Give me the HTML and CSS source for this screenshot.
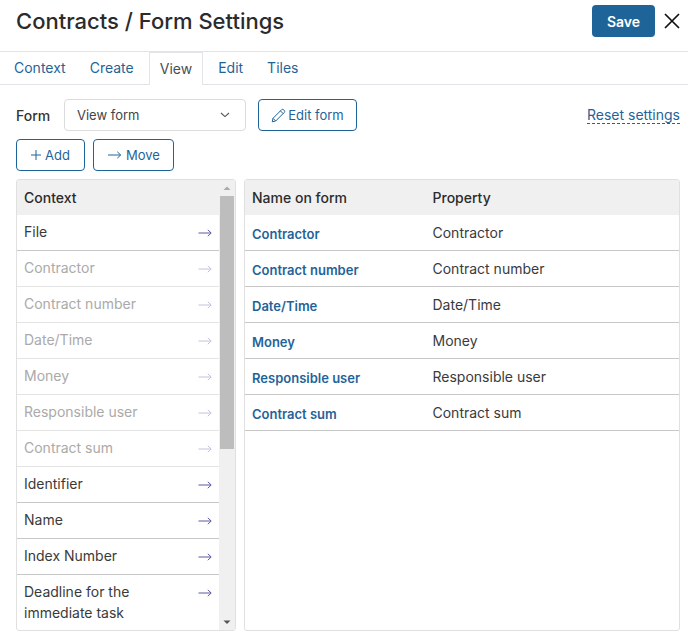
FILE: index.html
```html
<!DOCTYPE html>
<html lang="en">
<head>
<meta charset="utf-8">
<title>Form Settings</title>
<link rel="stylesheet" href="styles.css">
</head>
<body>
<svg class="sprite" width="0" height="0"><defs>
<symbol id="arrow" viewBox="0 0 14 8"><path d="M0.5 4H13M9.8 0.8L13.2 4L9.8 7.2" fill="none" stroke="currentColor" stroke-width="1"/></symbol>
</defs></svg>
<header class="header">
  <h1 class="title">Contracts / Form Settings</h1>
  <div class="header-actions">
    <button class="btn-save">Save</button>
    <svg class="close" width="16" height="16" viewBox="0 0 16 16"><path d="M1 1L15 15M15 1L1 15" stroke="#111" stroke-width="1.7" fill="none"/></svg>
  </div>
</header>
<nav class="tabs">
  <a class="tab">Context</a><a class="tab">Create</a><a class="tab active">View</a><a class="tab">Edit</a><a class="tab">Tiles</a>
</nav>
<div class="form-row">
  <span class="form-label">Form</span>
  <div class="select"><span>View form</span>
    <svg width="10" height="6" viewBox="0 0 10 6"><path d="M1 1L5 4.6L9 1" fill="none" stroke="#555" stroke-width="1.1"/></svg>
  </div>
  <button class="btn btn-edit"><svg width="15" height="15" viewBox="0 0 15 15"><path d="M1.2 13.8L2 10.3L10.6 1.7Q11.6 0.8 12.7 1.8L13.2 2.3Q14.2 3.4 13.3 4.4L4.7 13ZM2 10.3L4.7 13M9.4 2.9L12.1 5.6" fill="none" stroke="#1f6499" stroke-width="1"/></svg>Edit form</button>
  <a class="reset">Reset settings</a>
</div>
<div class="action-row">
  <button class="btn btn-add"><svg width="10" height="10" viewBox="0 0 10 10"><path d="M5 0V10M0 5H10" stroke="#1f6499" stroke-width="1" fill="none"/></svg>Add</button>
  <button class="btn btn-move"><svg class="move-arrow" width="15" height="8" viewBox="0 0 14 8"><use href="#arrow"/></svg>Move</button>
</div>
<main class="panels">
  <section class="panel panel-left">
    <div class="list">
      <div class="list-head">Context</div>
      <div class="item"><span>File</span><svg class="arrow" width="14" height="8"><use href="#arrow"/></svg></div>
      <div class="item off"><span>Contractor</span><svg class="arrow" width="14" height="8"><use href="#arrow"/></svg></div>
      <div class="item off"><span>Contract number</span><svg class="arrow" width="14" height="8"><use href="#arrow"/></svg></div>
      <div class="item off"><span>Date/Time</span><svg class="arrow" width="14" height="8"><use href="#arrow"/></svg></div>
      <div class="item off"><span>Money</span><svg class="arrow" width="14" height="8"><use href="#arrow"/></svg></div>
      <div class="item off"><span>Responsible user</span><svg class="arrow" width="14" height="8"><use href="#arrow"/></svg></div>
      <div class="item off"><span>Contract sum</span><svg class="arrow" width="14" height="8"><use href="#arrow"/></svg></div>
      <div class="item"><span>Identifier</span><svg class="arrow" width="14" height="8"><use href="#arrow"/></svg></div>
      <div class="item"><span>Name</span><svg class="arrow" width="14" height="8"><use href="#arrow"/></svg></div>
      <div class="item"><span>Index Number</span><svg class="arrow" width="14" height="8"><use href="#arrow"/></svg></div>
      <div class="item last"><span>Deadline for the immediate task</span><svg class="arrow" width="14" height="8"><use href="#arrow"/></svg></div>
    </div>
    <div class="scrollbar">
      <svg class="scroll-btn" width="16" height="16" viewBox="0 0 16 16"><path d="M4.5 10H11.5L8 6.5Z" fill="#aaa"/></svg>
      <div class="track"><div class="thumb"></div></div>
      <svg class="scroll-btn" width="16" height="16" viewBox="0 0 16 16"><path d="M4.5 6.5H11.5L8 10Z" fill="#555"/></svg>
    </div>
  </section>
  <section class="panel panel-right">
    <div class="grid-head"><span>Name on form</span><span>Property</span></div>
    <div class="grid-row"><a>Contractor</a><span>Contractor</span></div>
    <div class="grid-row"><a>Contract number</a><span>Contract number</span></div>
    <div class="grid-row"><a>Date/Time</a><span>Date/Time</span></div>
    <div class="grid-row"><a>Money</a><span>Money</span></div>
    <div class="grid-row"><a>Responsible user</a><span>Responsible user</span></div>
    <div class="grid-row"><a>Contract sum</a><span>Contract sum</span></div>
  </section>
</main>
</body>
</html>
```
FILE: styles.css
```css
* { box-sizing: border-box; }
html, body { margin: 0; padding: 0; }
body {
  width: 688px; height: 637px; overflow: hidden; background: #fff;
  font-family: Inter, "Liberation Sans", sans-serif; font-size: 14px; color: #333;
}
.sprite { position: absolute; }
button { font-family: inherit; cursor: pointer; }
.header {
  height: 52px; border-bottom: 1px solid #e2e4e9; padding: 5px 8px 0 16px;
  display: flex; justify-content: space-between; align-items: flex-start;
}
.title { margin: 0; font-size: 22px; line-height: 32px; font-weight: 500; color: #2b2b2b; }
.header-actions { display: flex; align-items: center; gap: 9px; }
.btn-save {
  width: 63px; height: 32px; border: 0; border-radius: 4px; background: #1f6499;
  color: #fff; font-size: 14px; font-weight: 600; padding: 0;
}
.close { display: block; }
.tabs { height: 33px; border-bottom: 1px solid #e2e4e9; display: flex; padding-left: 5px; }
.tab {
  padding: 0 8px; height: 32px; line-height: 32px; color: #1f6499; font-size: 14px;
  border: 1px solid transparent; border-top: 0; border-bottom: 0; margin-right: 6px; white-space: nowrap;
}
.tab.active {
  height: 33px; background: #fff; color: #4a4f55; border-color: #e2e4e9; border-top: 1px solid #e2e4e9;
  line-height: 31px; padding: 0 10px;
}
.form-row { display: flex; align-items: center; height: 32px; margin-top: 14px; padding: 0 8px 0 16px; }
.form-label { font-weight: 500; width: 48px; }
.select {
  width: 182px; height: 32px; border: 1px solid #dcdcdc; border-radius: 4px; padding: 0 15px 0 12px;
  display: flex; align-items: center; justify-content: space-between; font-size: 13px; color: #444;
}
.btn {
  height: 32px; border: 1px solid #1f6499; border-radius: 4px; background: #fff; color: #1f6499;
  font-size: 13px; display: inline-flex; align-items: center; justify-content: center; padding: 0;
}
.btn-edit { width: 99px; margin-left: 12px; gap: 2px; }
.reset {
  margin-left: auto; color: #1f6499; font-size: 14px; border-bottom: 1px dashed #1f6499; line-height: 17px;
}
.action-row { display: flex; gap: 8px; margin-top: 8px; padding-left: 16px; }
.btn-add { width: 69px; gap: 4px; }
.btn-move { width: 81px; gap: 4px; }
.panels { display: flex; gap: 8px; margin-top: 8px; padding: 0 8px 0 16px; height: 452px; }
.panel { border: 1px solid #e0e0e0; border-radius: 3px; overflow: hidden; background: #fff; }
.panel-left { width: 220px; display: flex; }
.panel-right { flex: 1; }
.list { width: 202px; flex: none; }
.list-head, .grid-head { height: 35px; background: #f0f0f0; font-weight: 500; }
.list-head { line-height: 35px; padding-left: 7px; width: 218px; color: #2b2b2b; }
.item {
  min-height: 36px; padding: 6px 7px 6px 7px; border-bottom: 1px solid #c8c8c8; line-height: 21px;
  display: flex; justify-content: space-between; gap: 4px; color: #3a3a3a;
}
.item.off { color: #aaa; border-bottom-color: #e4e4e4; }
.item.last { border-bottom: 0; }
.arrow { color: #5b5a9e; flex: none; margin-top: 8px; }
.item.off .arrow { color: #c4c2dc; }
.scrollbar { width: 16px; margin-left: 0; display: flex; flex-direction: column; background: #f0f0f0; flex: none; }
.scroll-btn { display: block; flex: none; }
.track { flex: 1; padding: 0 1px; }
.thumb { height: 253px; background: #bdbdbd; }
.grid-head, .grid-row { display: grid; grid-template-columns: 180.5px 1fr; padding-left: 7px; align-items: center; }
.grid-head { color: #2b2b2b; }
.grid-row { height: 36px; border-bottom: 1px solid #c8c8c8; color: #3a3a3a; }
.grid-row a { color: #1f6499; font-weight: 600; font-size: 13px; position: relative; top: 1px; }
```
